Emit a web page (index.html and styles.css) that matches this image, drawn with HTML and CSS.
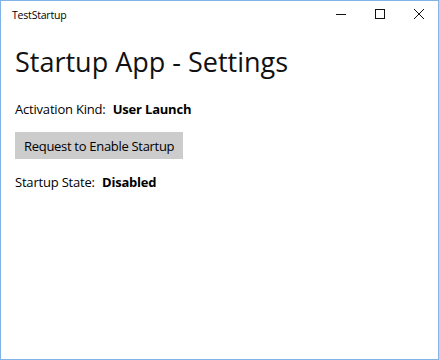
FILE: index.html
```html
<!DOCTYPE html>
<html lang="en">
<head>
    <meta charset="UTF-8">
    <title>TestStartup</title>
    <link rel="stylesheet" href="styles.css">
</head>
<body>
    <div class="window">
        <div class="title-bar">
            <span class="title">TestStartup</span>
            <div class="controls">
                <span class="control">
                    <svg width="10" height="10" viewBox="0 0 10 10"><path d="M0 5.5h10" stroke="#111" stroke-width="1"/></svg>
                </span>
                <span class="control">
                    <svg width="10" height="10" viewBox="0 0 10 10"><rect x="0.5" y="0.5" width="9" height="9" fill="none" stroke="#111" stroke-width="1"/></svg>
                </span>
                <span class="control">
                    <svg width="10" height="10" viewBox="0 0 10 10"><path d="M0 0L10 10M10 0L0 10" stroke="#111" stroke-width="1"/></svg>
                </span>
            </div>
        </div>

        <div class="content">
            <h1 class="heading">Startup App - Settings</h1>
            <p class="row">Activation Kind: <b>User Launch</b></p>
            <button class="enable-btn">Request to Enable Startup</button>
            <p class="row">Startup State: <b>Disabled</b></p>
        </div>
    </div>
</body>
</html>
```

FILE: styles.css
```css
* {
    margin: 0;
    padding: 0;
    box-sizing: border-box;
}

body {
    font-family: 'Open Sans', 'Noto Sans', sans-serif;
    color: #000;
    background: #fff;
}

.window {
    width: 439px;
    height: 360px;
    border: 1px solid #80b3e6;
    background: #fff;
}

.title-bar {
    display: flex;
    justify-content: space-between;
    align-items: center;
    height: 28px;
    padding-left: 11px;
}

.title {
    font-size: 10.5px;
    letter-spacing: -0.2px;
    color: #000;
}

.controls {
    display: flex;
    height: 100%;
}

.control {
    width: 39px;
    display: flex;
    justify-content: center;
    align-items: center;
    padding-bottom: 2px;
}

.content {
    padding: 14px 14px 0;
}

.heading {
    font-size: 27px;
    font-weight: 400;
    line-height: 38px;
    color: #111;
    margin-bottom: 19px;
}

.row {
    font-size: 13px;
    line-height: 18px;
    letter-spacing: -0.2px;
}

.row b {
    font-weight: 700;
    margin-left: 4px;
}

.enable-btn {
    font-family: inherit;
    font-size: 13px;
    letter-spacing: -0.3px;
    background: #cccccc;
    border: none;
    height: 27px;
    padding: 0 9px;
    margin: 14px 0 14px;
    color: #000;
}
```
